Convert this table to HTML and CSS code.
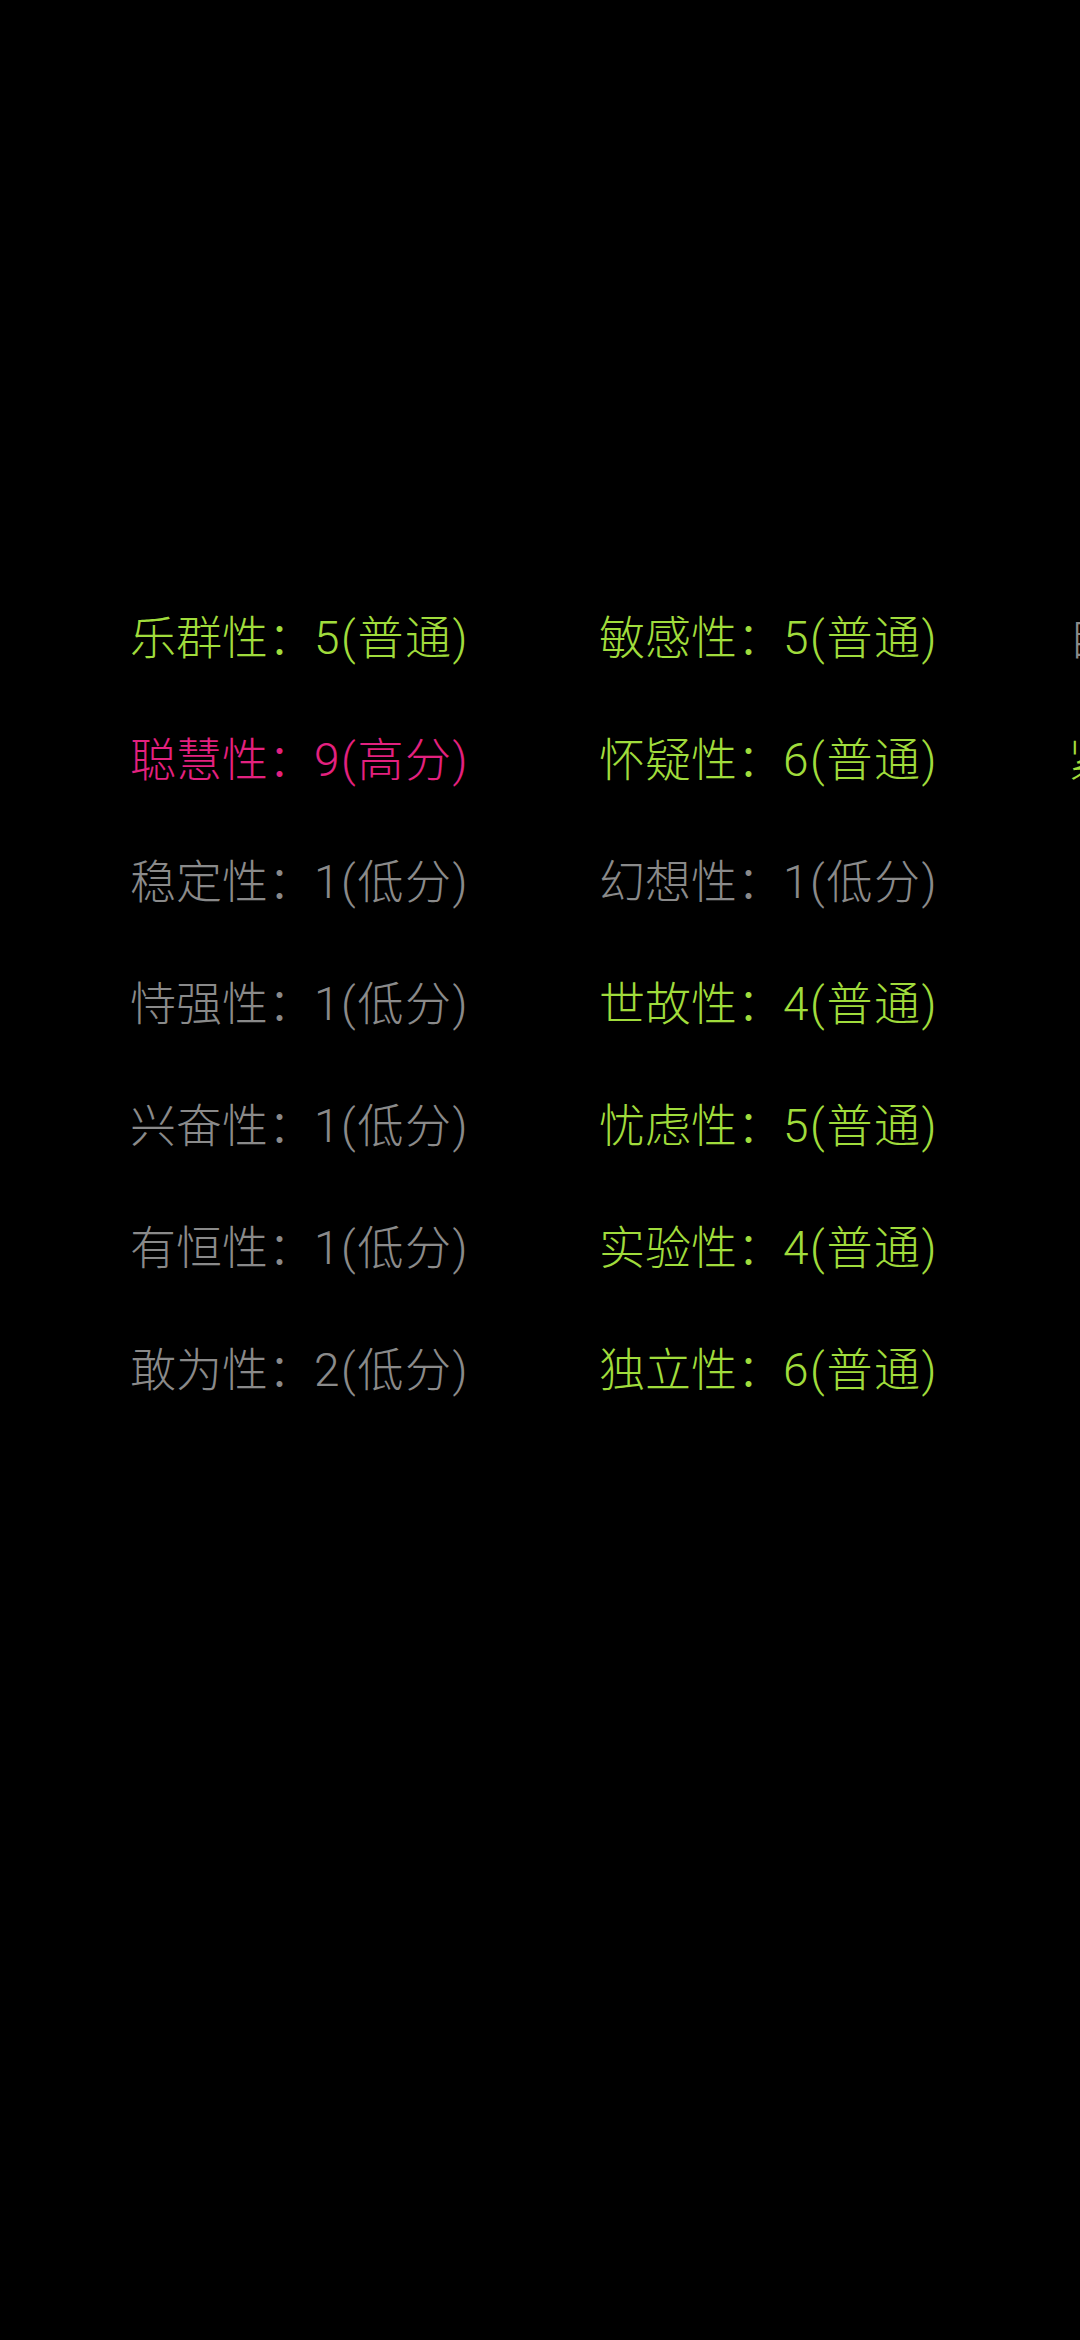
FILE: index.html
```html
<!DOCTYPE html>
<html lang="zh-CN">

<head>
    <meta charset="UTF-8">
    <meta name="viewport" content="width=device-width, initial-scale=1.0">
    <title>16PF 结果</title>

    <link rel="stylesheet" href="styles.css">
</head>

<body>
    <div id="result">
        <ul class="col">
            <li class="mid">乐群性：<span>5(普通)</span></li>
            <li class="high">聪慧性：<span>9(高分)</span></li>
            <li class="low">稳定性：<span>1(低分)</span></li>
            <li class="low">恃强性：<span>1(低分)</span></li>
            <li class="low">兴奋性：<span>1(低分)</span></li>
            <li class="low">有恒性：<span>1(低分)</span></li>
            <li class="low">敢为性：<span>2(低分)</span></li>
        </ul>
        <ul class="col">
            <li class="mid">敏感性：<span>5(普通)</span></li>
            <li class="mid">怀疑性：<span>6(普通)</span></li>
            <li class="low">幻想性：<span>1(低分)</span></li>
            <li class="mid">世故性：<span>4(普通)</span></li>
            <li class="mid">忧虑性：<span>5(普通)</span></li>
            <li class="mid">实验性：<span>4(普通)</span></li>
            <li class="mid">独立性：<span>6(普通)</span></li>
        </ul>
        <ul class="col">
            <li class="low">自律性：<span>1(低分)</span></li>
            <li class="mid">紧张性：<span>5(普通)</span></li>
        </ul>
    </div>
</body>

</html>
```

FILE: styles.css
```css
* {
    margin: 0;
    padding: 0;
    list-style: none;
}

html,
body {
    background: #000000;
}

body {
    width: 1080px;
    height: 2340px;
    overflow: hidden;
    font-family: Roboto, "Noto Sans CJK SC", sans-serif;
}

#result {
    display: flex;
    padding: 577px 0 0 130px;
}

.col {
    flex: none;
    width: 469px;
}

.col li {
    height: 122px;
    line-height: 122px;
    font-size: 46px;
    font-weight: 300;
    white-space: nowrap;
}

/* 分数那段括号间距稍宽一点 */
.col li span {
    letter-spacing: 1.6px;
}

.col li.mid {
    color: #a0dc3c;
}

.col li.high {
    color: #e3217f;
}

.col li.low {
    color: #8a8a8a;
}
```
